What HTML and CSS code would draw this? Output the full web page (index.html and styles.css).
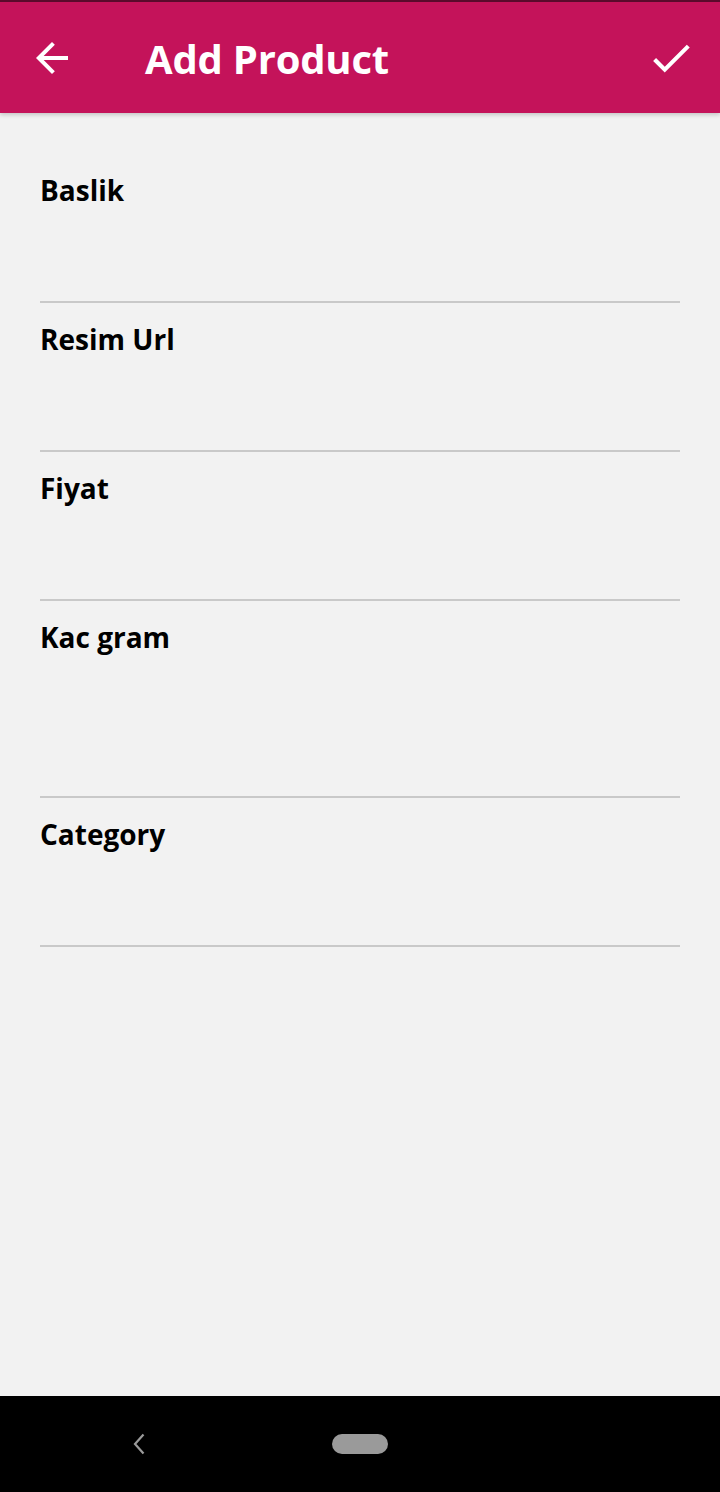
FILE: index.html
```html
<!DOCTYPE html>
<html lang="tr">
<head>
<meta charset="utf-8">
<title>Add Product</title>
<link rel="stylesheet" href="styles.css">
</head>
<body>
<div class="screen">
  <div class="status-strip"></div>
  <header class="appbar">
    <button class="icon-btn back" aria-label="Back">
      <svg width="48" height="48" viewBox="0 0 24 24"><path d="M20 11H7.83l5.59-5.59L12 4l-8 8 8 8 1.41-1.41L7.83 13H20v-2z" fill="#fff"/></svg>
    </button>
    <h1 class="title">Add Product</h1>
    <button class="icon-btn save" aria-label="Save">
      <svg width="50" height="50" viewBox="0 0 24 24"><path d="M9 16.17L4.83 12l-1.42 1.41L9 19 21 7l-1.41-1.41z" fill="#fff"/></svg>
    </button>
  </header>
  <main class="form">
    <div class="field"><label class="label">Baslik</label><div class="input"></div></div>
    <div class="field"><label class="label">Resim Url</label><div class="input"></div></div>
    <div class="field"><label class="label">Fiyat</label><div class="input"></div></div>
    <div class="field"><label class="label">Kac gram</label><div class="input tall"></div></div>
    <div class="field"><label class="label">Category</label><div class="input"></div></div>
  </main>
  <nav class="navbar">
    <svg class="nav-back" width="14" height="22" viewBox="0 0 14 22"><path d="M11.5 1.5L3 11l8.5 9.5" fill="none" stroke="#9a9a9a" stroke-width="2.2"/></svg>
    <div class="nav-home"></div>
  </nav>
</div>
</body>
</html>
```

FILE: styles.css
```css
* { box-sizing: border-box; }
html, body { margin: 0; padding: 0; }
body {
  width: 720px;
  height: 1492px;
  background: #f2f2f2;
  font-family: "Open Sans", "Noto Sans", sans-serif;
  overflow: hidden;
}
.screen {
  display: flex;
  flex-direction: column;
  height: 1492px;
}
.status-strip {
  height: 2px;
  background: #5c0b2c;
}
.appbar {
  height: 111px;
  background: #c4135a;
  display: flex;
  align-items: center;
  position: relative;
  z-index: 1;
  box-shadow: 0 2px 4px rgba(0,0,0,0.18);
}
.icon-btn {
  background: none;
  border: 0;
  padding: 0;
  display: flex;
}
.back { margin-left: 28px; }
.title {
  margin: 2px 0 0 69px;
  flex: 1;
  color: #fff;
  font-size: 40px;
  font-weight: 700;
  line-height: 48px;
  letter-spacing: -0.2px;
}
.save { margin-right: 24px; }
.form {
  flex: 1;
  padding: 41px 40px 0;
}
.field {
  padding-top: 18px;
  border-bottom: 2px solid #c9c9c9;
}
.label {
  display: block;
  font-size: 28px;
  font-weight: 700;
  line-height: 36px;
  color: #000;
}
.input { height: 93px; }
.input.tall { height: 141px; }
.navbar {
  height: 96px;
  background: #000;
  display: flex;
  align-items: center;
}
.nav-back {
  margin-left: 132px;
}
.nav-home {
  margin-left: 186px;
  width: 56px;
  height: 20px;
  border-radius: 10px;
  background: #9a9a9a;
}
```
